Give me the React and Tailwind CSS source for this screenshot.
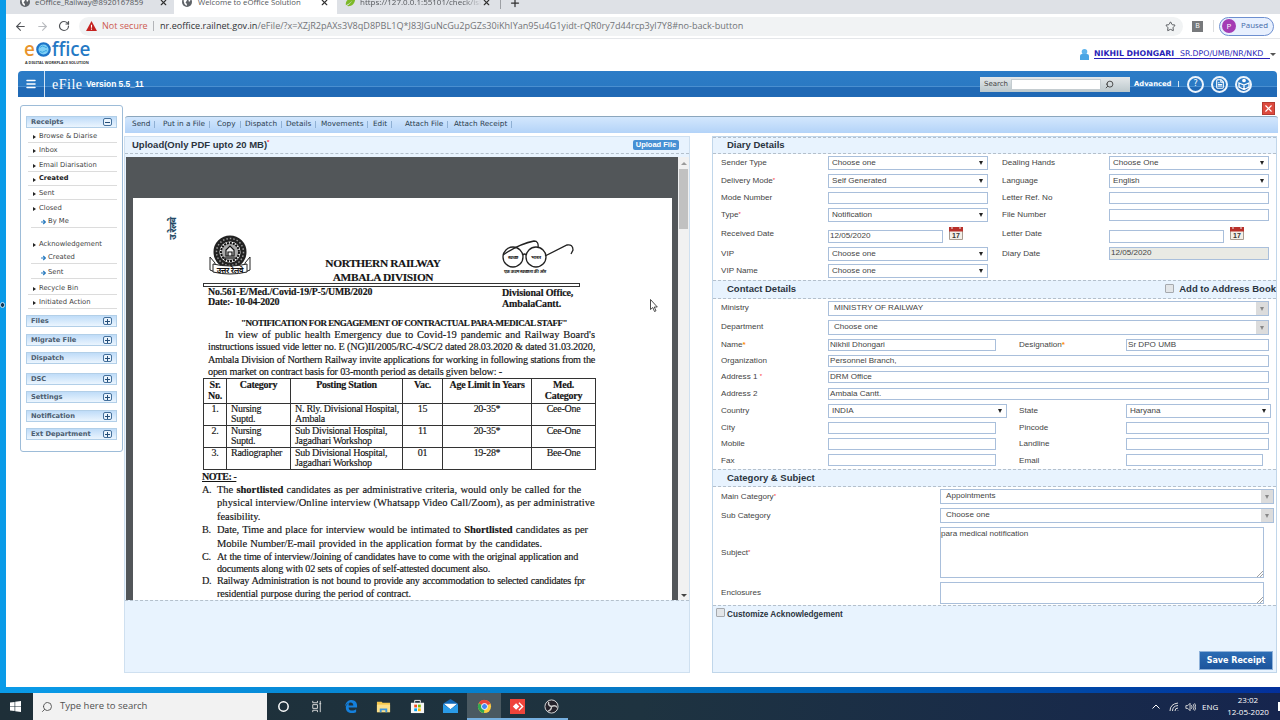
import React from 'react'
import { ArrowLeft, ArrowRight, RotateCw, Star, Plus, X, Search, Menu, FileText } from 'lucide-react'

const SIDE_ITEMS = [
  { label: 'Browse & Diarise', h: 'h-[14px]' },
  { label: 'Inbox', h: 'h-[14px]' },
  { label: 'Email Diarisation', h: 'h-[15px]' },
  { label: 'Created', h: 'h-[14px]', bold: true },
  { label: 'Sent', h: 'h-[14px]' },
  { label: 'Closed', h: 'h-[14px]', plain: true },
  { label: 'By Me', h: 'h-[14px]', sub: true },
  { label: '', h: 'h-[7px]', spacer: true },
  { label: 'Acknowledgement', h: 'h-[15px]', plain: true },
  { label: 'Created', h: 'h-[14px]', sub: true },
  { label: 'Sent', h: 'h-[15px]', sub: true },
  { label: 'Recycle Bin', h: 'h-[16px]' },
  { label: 'Initiated Action', h: 'h-[14px]' },
]

const SIDE_GROUPS = [
  { label: 'Files', h: 'h-[19px]' },
  { label: 'Migrate File', h: 'h-[18px]' },
  { label: 'Dispatch', h: 'h-[21px]' },
  { label: 'DSC', h: 'h-[18px]' },
  { label: 'Settings', h: 'h-[19px]' },
  { label: 'Notification', h: 'h-[18px]' },
  { label: 'Ext Department', h: 'h-[18px]' },
]

const TOOLS = [
  ['Send', 'w-[31px]'],
  ['Put in a File', 'w-[54px]'],
  ['Copy', 'w-[28px]'],
  ['Dispatch', 'w-[41px]'],
  ['Details', 'w-[35px]'],
  ['Movements', 'w-[52px]'],
  ['Edit', 'w-[32px]'],
  ['Attach File', 'w-[49px]'],
  ['Attach Receipt', 'w-[60px]'],
]

const POSTS = [
  { no: '1.', cat: ['Nursing', 'Suptd.'], station: ['N. Rly. Divisional Hospital,', 'Ambala'], vac: '15', age: '20-35*', med: 'Cee-One' },
  { no: '2.', cat: ['Nursing', 'Suptd.'], station: ['Sub Divisional Hospital,', 'Jagadhari Workshop'], vac: '11', age: '20-35*', med: 'Cee-One' },
  { no: '3.', cat: ['Radiographer'], station: ['Sub Divisional Hospital,', 'Jagadhari Workshop'], vac: '01', age: '19-28*', med: 'Bee-One' },
]

function Globe() {
  return (
    <svg viewBox="0 0 10 10" className="h-[10px] w-[10px] shrink-0">
      <circle cx="5" cy="5" r="5" fill="#5f6368" />
      <path d="M1.500 3.500 4 2l1 1.500L3.500 5.500 5 7 4.500 9 2.500 7zM6 1.500 8.500 3.500 7 5z" fill="#fff" />
    </svg>
  )
}

function BrowserTabs() {
  return (
    <div className="flex h-[14px] shrink-0 overflow-hidden bg-[#dee1e6] font-['Open_Sans','Noto_Sans',sans-serif] leading-[12px] text-[#55585c]">
      <div className="flex h-full w-[168px] items-start pl-[14px]">
        <div className="-mt-[3px]"><Globe /></div>
        <span className="-mt-[4px] ml-[5px] w-[124px] text-[7.800px] whitespace-nowrap">eOffice_Railway@8920167859</span>
        <X className="-mt-[2px] h-[9px] w-[9px] text-[#303030]" strokeWidth={3} />
      </div>
      <div className="flex h-full w-[163px] items-start bg-white pl-[8px]">
        <div className="-mt-[3px]"><Globe /></div>
        <span className="-mt-[4px] ml-[6px] w-[122px] text-[7.800px] whitespace-nowrap">Welcome to eOffice Solution</span>
        <X className="-mt-[2px] h-[9px] w-[9px] text-[#303030]" strokeWidth={3} />
      </div>
      <div className="flex h-full w-[163px] items-start pl-[8px]">
        <svg viewBox="0 0 12 12" className="-mt-[4px] h-[11px] w-[11px]">
          <path d="M1 10C0 4 5 3 11 0c1 6-2 12-9 11 3-2 4-3 6-6-3 3-4 4-7 5z" fill="#7db928" />
        </svg>
        <span className="-mt-[4px] ml-[4px] w-[122px] overflow-hidden text-[8px] whitespace-nowrap [mask-image:linear-gradient(90deg,#000_85%,transparent)]">https://127.0.0.1:55101/check/isL</span>
        <X className="-mt-[2px] h-[9px] w-[9px] text-[#303030]" strokeWidth={3} />
      </div>
      <div className="h-[9px] w-px bg-[#9da0a5]" />
      <Plus className="-mt-[3px] ml-[8px] h-[12px] w-[12px] text-[#303030]" strokeWidth={2.5} />
    </div>
  )
}

function AddressBar() {
  return (
    <div className="flex h-[25px] shrink-0 items-center border-b border-[#e4e6e9] bg-white font-['Open_Sans','Noto_Sans',sans-serif]">
      <ArrowLeft className="ml-[8px] h-[13px] w-[13px] text-[#505357]" />
      <ArrowRight className="ml-[9px] h-[13px] w-[13px] text-[#b9bbbf]" />
      <RotateCw className="ml-[9px] h-[12px] w-[12px] text-[#505357]" strokeWidth={2.4} />
      <div className="ml-[9px] flex h-[19px] w-[1104px] items-center rounded-full bg-[#f1f3f4] pl-[7px]">
        <svg viewBox="0 0 12 11" className="h-[10px] w-[11px]">
          <path d="M6 0 12 11H0z" fill="#c5221f" />
          <path d="M5.400 4h1.200v3.500H5.400zM5.400 8.300h1.200v1.200H5.400z" fill="#fff" />
        </svg>
        <span className="ml-[5px] w-[51px] text-[9px] whitespace-nowrap text-[#cd5a50]">Not secure</span>
        <span className="h-[10px] w-px bg-[#b3b5b8]" />
        <span className="ml-[6px] flex-1 text-[9.100px] whitespace-nowrap text-[#717478]">
          <span className="text-[#303235]">nr.eoffice.railnet.gov.in</span>/eFile/?x=XZjR2pAXs3V8qD8PBL1Q*J83JGuNcGu2pGZs30iKhIYan95u4G1yidt-rQR0ry7d44rcp3yl7Y8#no-back-button
        </span>
        <Star className="mr-[7px] h-[11px] w-[11px] text-[#4d5054]" strokeWidth={2} />
      </div>
      <div className="ml-[9px] flex h-[11px] w-[11px] items-center justify-center bg-[#77797c] text-[7px] text-white">B</div>
      <div className="ml-[10px] h-[12px] w-px bg-[#dcdee0]" />
      <div className="ml-[5px] flex h-[19px] w-[55px] items-center rounded-full border border-[#6d8fd0] bg-[#e8f0fe] pl-[2px]">
        <div className="flex h-[14px] w-[14px] items-center justify-center rounded-full bg-[#a43cb4] text-[8px] text-white">P</div>
        <span className="ml-[5px] text-[7.900px] text-[#4568a8]">Paused</span>
      </div>
    </div>
  )
}

function BrandRow() {
  return (
    <div className="flex h-[32px] shrink-0 justify-between">
      <div className="ml-[18px] w-[70px] pt-[1px] font-['Noto_Sans',sans-serif]">
        <div className="flex h-[18px] items-center text-[19px] leading-[18px] font-medium tracking-[-0.1px] text-[#2478c4]">
          <span className="text-[#e8932b]">e</span>
          <svg viewBox="0 0 16 16" className="mx-px h-[15px] w-[15px]">
            <circle cx="8" cy="8" r="6.600" fill="#7fd0f5" stroke="#1c74c8" strokeWidth="2.400" />
            <path d="M4 6q3-3 5-1t3 0M4 10q3 2 5 0t3 0" stroke="#2f9fe0" fill="none" />
          </svg>
          <span>ffice</span>
        </div>
        <div className="mt-[2px] ml-[1px] text-[3.800px] leading-[5px] font-bold whitespace-nowrap text-[#333]">A DIGITAL WORKPLACE SOLUTION</div>
      </div>
      <div className="mt-[9px] flex h-[12px] items-center font-['DejaVu_Sans',sans-serif] whitespace-nowrap text-[#2a1fb8]">
        <svg viewBox="0 0 9 11" className="mr-[5px] h-[11px] w-[9px]">
          <circle cx="4.500" cy="2.800" r="2.800" fill="#5fb4ec" />
          <path d="M0 11V7q0-2 2-2h5q2 0 2 2v4z" fill="#4aa5e4" />
        </svg>
        <div className="flex w-[176px] border-b border-[#2a1fb8] leading-[9px]">
          <b className="w-[86px] text-[7.800px]">NIKHIL DHONGARI</b>
          <span className="text-[7.800px]">SR.DPO/UMB/NR/NKD</span>
        </div>
        <span className="mr-[4px] border-x-[3px] border-t-[3px] border-x-transparent border-t-[#555]" />
      </div>
    </div>
  )
}

function RoundIcon({ children }) {
  return (
    <span className="flex h-[17px] w-[17px] items-center justify-center rounded-full border-2 border-[#eef5fc] text-white">{children}</span>
  )
}

function HeaderBar() {
  return (
    <div className="ml-[12px] flex h-[26px] w-[1259px] shrink-0 items-center rounded-t-[4px] bg-[linear-gradient(#2c7cc7_0,#2a79c3_15px,#4a8fd0_15px,#4a8fd0_16px,#2069b5_16px,#2069b5_100%)] font-['DejaVu_Sans',sans-serif] text-white">
      <div className="flex h-full w-[27px] items-center justify-center border-r border-white/80">
        <Menu className="h-[12px] w-[12px]" strokeWidth={3} />
      </div>
      <span className="ml-[7px] w-[34px] font-['Liberation_Serif',serif] text-[14px] tracking-[0.500px]">eFile</span>
      <span className="pt-px font-['Liberation_Sans',sans-serif] text-[8.400px] font-bold">Version 5.5_11</span>
      <div className="ml-auto flex h-[15px] w-[150px] items-center bg-gradient-to-b from-[#e4e8ea] to-[#bcc8cc] text-[#444]">
        <span className="w-[31px] pl-[4px] text-[7px]">Search</span>
        <span className="h-[11px] w-[90px] border border-[#c4ccd0] bg-white" />
        <Search className="ml-[4px] h-[9px] w-[9px] -scale-x-100 text-[#444]" strokeWidth={2.5} />
      </div>
      <span className="ml-[4px] w-[42px] text-[6.800px] font-bold">Advanced</span>
      <span className="mr-[8px] ml-[2px] h-[6px] w-px bg-white/80" />
      <div className="flex gap-[7px] pr-[25px]">
        <RoundIcon><span className="text-[8px] leading-none">?</span></RoundIcon>
        <RoundIcon><FileText className="h-[10px] w-[10px]" strokeWidth={2.5} /></RoundIcon>
        <RoundIcon>
          <svg viewBox="0 0 12 12" className="h-[12px] w-[12px]" fill="none" stroke="currentColor" strokeWidth="1.300">
            <circle cx="6" cy="2.500" r="1.200" fill="currentColor" />
            <path d="M1 5l5 2 5-2v4l-5 2.500L1 9zM6 7v4" />
          </svg>
        </RoundIcon>
      </div>
    </div>
  )
}

function SideHead({ label, open }) {
  return (
    <div className="flex h-[12px] items-center justify-between border border-[#b2cfe8] bg-gradient-to-b from-[#bfdcf8] to-[#ebf5fe] pr-[4px] pl-[4px] text-[6.700px] font-bold text-[#4c5d70]">
      <span>{label}</span>
      <span className="flex h-[8px] w-[9px] items-center justify-center rounded-[2px] border border-[#44709c] bg-[#eaf4fd]">
        <svg viewBox="0 0 5 5" className="h-[5px] w-[5px]">
          <path d={open ? 'M0 2.500h5' : 'M0 2.500h5M2.500 0v5'} stroke="#254e78" strokeWidth="1" />
        </svg>
      </span>
    </div>
  )
}

function Sidebar() {
  return (
    <div className="mt-[8px] ml-[14px] h-[347px] w-[103px] shrink-0 rounded-[3px] border border-[#9dbcd8] px-[5px] pt-[10px] font-['DejaVu_Sans',sans-serif] text-[6.800px] text-[#444]">
      <SideHead label="Receipts" open />
      <div className="pt-px pl-[2px]">
        {SIDE_ITEMS.map((it, i) => (
          <div
            key={i}
            className={`${it.h} flex items-end whitespace-nowrap ${it.plain || it.spacer ? '' : 'border-b border-[#dcdcdc]'} ${it.sub ? 'ml-[3px]' : ''}`}
          >
            {it.sub && (
              <svg viewBox="0 0 5 6" className="mr-[2px] mb-[2px] ml-[10px] h-[6px] w-[5px]">
                <path d="M0 3h4M2.200 1 4.400 3 2.200 5" fill="none" stroke="#2a7cc0" strokeWidth="1.200" />
              </svg>
            )}
            {!it.sub && !it.spacer && (
              <span className="mr-[3px] mb-[3px] ml-[5px] border-y-[2.500px] border-l-[3px] border-y-transparent border-l-[#222]" />
            )}
            <span className={it.bold ? 'pb-px text-[6.600px] font-bold text-[#222]' : 'pb-px'}>{it.label}</span>
          </div>
        ))}
      </div>
      <div className="pt-[6px]">
        {SIDE_GROUPS.map((g) => (
          <div key={g.label} className={g.h}>
            <SideHead label={g.label} />
          </div>
        ))}
      </div>
    </div>
  )
}

function Toolbar() {
  return (
    <div className="ml-[1px] flex h-[17px] w-[1153px] shrink-0 items-center rounded-t-[3px] border-t border-[#8ba6bd] bg-gradient-to-b from-[#d3e7fd] to-[#b3d3f8] pb-[2px] pl-[7px] font-['DejaVu_Sans',sans-serif] text-[7.300px] text-[#2c3e50]">
      {TOOLS.map(([label, w]) => (
        <div key={label} className={`${w} flex items-center whitespace-nowrap`}>
          <span>{label}</span>
          <span className="ml-[4px] h-[7px] w-px bg-[#8fb0d4]" />
        </div>
      ))}
    </div>
  )
}

// one scanned text line stretched to its measure
function Line({ w, h = 'h-[12px]', children, className = '' }) {
  return <div className={`${w} ${h} whitespace-nowrap [text-align-last:justify] ${className}`}>{children}</div>
}

function Emblem() {
  return (
    <svg viewBox="0 0 44 42" className="h-[42px] w-[44px]">
      <circle cx="21" cy="17" r="13.500" fill="none" stroke="#222" strokeWidth="6" />
      <circle cx="21" cy="17" r="13.500" fill="none" stroke="#999" strokeWidth="1.500" strokeDasharray="1.500 2" />
      <circle cx="21" cy="17" r="9" fill="#aaa" stroke="#111" strokeWidth="2" strokeDasharray="2 1" />
      <path d="M17 21v-6l4-4 4 4v6zM19 21v-4h4v4M14 23h14" fill="#eee" stroke="#111" strokeWidth="1.200" />
      <path d="M1 22v13l5 2v-9zM41 22v13l-5 2v-9z" fill="#fff" stroke="#222" />
      <path d="M4 29q17 4 34 0v8q-17 4-34 0z" fill="#fff" stroke="#222" />
      <text x="21" y="37.500" textAnchor="middle" fontSize="7.500" fontWeight="bold" fontFamily="Noto Sans Devanagari, Noto Sans, sans-serif" fill="#111">उत्तर रेलवे</text>
    </svg>
  )
}

function Glasses() {
  return (
    <svg viewBox="0 0 74 36" className="h-[36px] w-[74px]" fill="none" stroke="#222" strokeWidth="1.300">
      <circle cx="12" cy="17" r="10" />
      <circle cx="35" cy="17" r="10" />
      <path d="M22 15q1.500-2 3 0M2 15Q18 4 33 1q5 0 4 7M44 16 66 5q6-1 6 5l-2 4" />
      <g stroke="none" fill="#222" fontFamily="Noto Sans Devanagari, Noto Sans, sans-serif" fontWeight="bold" textAnchor="middle">
        <text x="12" y="19" fontSize="5">स्वच्छ</text>
        <text x="35" y="19" fontSize="5">भारत</text>
        <text x="24" y="33" fontSize="4.500">एक कदम स्वच्छता की ओर</text>
      </g>
    </svg>
  )
}

function NoteItem({ mark, children }) {
  return (
    <div className="flex">
      <span className="w-[15px]">{mark}</span>
      <div>{children}</div>
    </div>
  )
}

function ScannedPage() {
  return (
    <div className="mt-[41px] ml-[7px] h-[403px] w-[539px] overflow-hidden bg-white font-['Liberation_Serif',serif] text-[10.200px] leading-[12px] tracking-[-0.270px] text-[#141414] [-webkit-text-stroke:0.150px]">
      <div className="flex h-[85px]">
        <div className="flex w-[76px] justify-center pt-[18px]">
          <span className="-rotate-90 self-start pt-[5px] pr-[8px] font-['Noto_Sans_Devanagari','Noto_Sans',sans-serif] text-[9px] font-bold whitespace-nowrap text-[#244a66]">उ.रेलवे</span>
        </div>
        <div className="w-[44px] pt-[37px]"><Emblem /></div>
        <div className="w-[260px] pt-[58px] text-center text-[11.400px] leading-[14px] font-bold tracking-[-0.370px]">
          <div>NORTHERN RAILWAY</div>
          <div>AMBALA DIVISION</div>
        </div>
        <div className="-ml-[12px] pt-[42px]"><Glasses /></div>
      </div>
      <div className="ml-[70px] h-[4px] w-[377px] border border-[#333]" />
      <div className="ml-[75px] flex h-[30px] justify-between pr-[77px] text-[10px] leading-[10px] font-bold">
        <div className="w-[165px]">
          <Line w="w-[165px]" h="h-[10px]" className="text-[9.800px] tracking-[-0.130px]">No.561-E/Med./Covid-19/P-5/UMB/2020</Line>
          <div>Date:- 10-04-2020</div>
        </div>
        <div className="w-[93px] pt-px leading-[10.500px] tracking-[-0.150px]">
          <div>Divisional Office,</div>
          <div>AmbalaCantt.</div>
        </div>
      </div>
      <Line w="w-[326px]" className="ml-[108px] text-[9px] font-bold tracking-[-0.490px]">&quot;NOTIFICATION FOR ENGAGEMENT OF CONTRACTUAL PARA-MEDICAL STAFF&quot;</Line>
      <div className="ml-[75px] leading-[12.500px]">
        <Line w="w-[370px]" h="h-[12.300px]" className="ml-[17px] text-[10.500px] tracking-[0px]">In view of public health Emergency due to Covid-19 pandemic and Railway Board&apos;s</Line>
        <Line w="w-[387px]" h="h-[12.300px]" className="tracking-[-0.200px]">instructions issued vide letter no. E (NG)II/2005/RC-4/SC/2 dated 28.03.2020 &amp; dated 31.03.2020,</Line>
        <Line w="w-[387px]" h="h-[12.300px]">Ambala Division of Northern Railway invite applications for working in following stations from the</Line>
        <Line w="w-[294px]" h="h-[12px]" className="tracking-[-0.200px]">open market on contract basis for 03-month period as details given below: -</Line>
      </div>
      <table className="ml-[70px] w-[393px] table-fixed border-collapse text-[10px] leading-[11px] [&_td]:border [&_td]:border-[#333] [&_td]:p-0 [&_td]:align-top [&_th]:border [&_th]:border-[#333] [&_th]:p-0 [&_th]:align-top">
        <colgroup>
          <col className="w-[23px]" />
          <col className="w-[64px]" />
          <col className="w-[112px]" />
          <col className="w-[40px]" />
          <col className="w-[89px]" />
          <col className="w-[64px]" />
        </colgroup>
        <thead>
          <tr className="h-[25px]">
            <th>Sr.<br />No.</th>
            <th>Category</th>
            <th>Posting Station</th>
            <th>Vac.</th>
            <th>Age Limit in Years</th>
            <th>Med.<br />Category</th>
          </tr>
        </thead>
        <tbody className="leading-[10.500px]">
          {POSTS.map((p) => (
            <tr key={p.no} className="h-[22px] text-center">
              <td>{p.no}</td>
              <td className="text-left"><div className="pl-[4px]">{p.cat.map((l) => <div key={l}>{l}</div>)}</div></td>
              <td className="text-left"><div className="pl-[4px] whitespace-nowrap">{p.station.map((l) => <div key={l}>{l}</div>)}</div></td>
              <td>{p.vac}</td>
              <td>{p.age}</td>
              <td>{p.med}</td>
            </tr>
          ))}
        </tbody>
      </table>
      <div className="ml-[69px]">
        <div className="h-[14px] pt-px text-[10px] font-bold tracking-[-0.450px] underline">NOTE: -</div>
        <NoteItem mark="A.">
          <Line w="w-[364px]" h="h-[13.500px]" className="text-[10.500px] tracking-[-0.050px]">The <b>shortlisted</b> candidates as per administrative criteria, would only be called for the</Line>
          <Line w="w-[375px]" h="h-[13.500px]" className="text-[10.500px] tracking-[0.080px]">physical interview/Online interview (Whatsapp Video Call/Zoom), as per administrative</Line>
          <Line w="w-[44px]" h="h-[13.500px]" className="text-[10.500px] tracking-[-0.050px]">feasibility.</Line>
        </NoteItem>
        <NoteItem mark="B.">
          <Line w="w-[371px]" h="h-[13.500px]" className="text-[10.500px] tracking-[-0.050px]">Date, Time and place for interview would be intimated to <b>Shortlisted</b> candidates as per</Line>
          <Line w="w-[325px]" h="h-[13px]" className="text-[10.500px] tracking-[-0.050px]">Mobile Number/E-mail provided in the application format by the candidates.</Line>
        </NoteItem>
        <NoteItem mark="C.">
          <Line w="w-[361px]" h="h-[12.300px]">At the time of interview/Joining of candidates have to come with the original application and</Line>
          <Line w="w-[273px]" h="h-[12.300px]" className="tracking-[-0.230px]">documents along with 02 sets of copies of self-attested document also.</Line>
        </NoteItem>
        <NoteItem mark="D.">
          <Line w="w-[368px]" h="h-[12.300px]">Railway Administration is not bound to provide any accommodation to selected candidates fpr</Line>
          <Line w="w-[194px]" h="h-[12.300px]" className="tracking-[-0.130px]">residential purpose during the period of contract.</Line>
        </NoteItem>
      </div>
    </div>
  )
}

function UploadPanel() {
  return (
    <div className="flex h-[537px] w-[566px] flex-col border border-[#cfe0f0] bg-[#e8f3fe]">
      <div className="flex h-[17px] shrink-0 items-center justify-between border-b border-dashed border-[#b4c0cc] pr-[10px] pl-[7px] text-[9.500px] font-bold text-[#2b3440]">
        <span>Upload(Only PDF upto 20 MB)<span className="align-top text-[6px] leading-[8px] text-red-500">*</span></span>
        <span className="flex h-[10px] w-[46px] items-center justify-center rounded-[2px] bg-[#4790d4] text-[7.500px] whitespace-nowrap text-white">Upload File</span>
      </div>
      <div className="mt-[3px] flex h-[444px] shrink-0 overflow-hidden border-b border-dashed border-[#b4c0cc] pl-[1px]">
        <div className="w-[553px] bg-[#525659]"><ScannedPage /></div>
        <div className="flex w-[11px] flex-col items-center bg-[#f1f1f1] pt-[5px] pb-[3px]">
          <span className="border-x-[3px] border-b-[3px] border-x-transparent border-b-[#9a9a9a]" />
          <span className="mt-[4px] h-[60px] w-[9px] bg-[#c1c1c1]" />
          <span className="mt-auto border-x-[3px] border-t-[3px] border-x-transparent border-t-[#444]" />
        </div>
      </div>
    </div>
  )
}

function Label({ w, star, children, className = '' }) {
  return (
    <span className={`${w} flex shrink-0 leading-[14px] whitespace-pre ${className}`}>
      <span>{children}</span>
      {star === 'red' && <span className="text-[6px] leading-[12px] text-red-500">*</span>}
      {star === 'orange' && <span className="text-[8px] leading-[13px] font-bold text-orange-400">*</span>}
    </span>
  )
}

function Select({ w, children }) {
  return (
    <div className={`${w} flex h-[14px] shrink-0 items-center justify-between border border-[#a9bfdb] bg-white pr-[4px] pl-[3px]`}>
      <span>{children}</span>
      <span className="border-x-[2.500px] border-t-[4px] border-x-transparent border-t-[#222]" />
    </div>
  )
}

function Combo({ w, children }) {
  return (
    <div className={`${w} flex h-[15px] shrink-0 items-center justify-between border border-[#a9bfdb] bg-white pl-[5px]`}>
      <span>{children}</span>
      <span className="flex h-full w-[12px] items-center justify-center bg-[#dcdcdc]">
        <span className="border-x-[2.500px] border-t-[4px] border-x-transparent border-t-[#888]" />
      </span>
    </div>
  )
}

function Field({ w, h = 'h-[12px]', bg = 'bg-white', children }) {
  return (
    <div className={`${w} ${h} ${bg} flex shrink-0 items-center border border-[#a9bfdb] pl-px whitespace-nowrap`}>{children}</div>
  )
}

function Calendar() {
  return (
    <svg viewBox="0 0 14 14" className="ml-[6px] h-[14px] w-[14px] shrink-0">
      <path d="M.5 1.500h13v12H.5z" fill="#f3efe8" stroke="#a89c90" />
      <path d="M0 1h14v4.500H0z" fill="#b8302a" />
      <path d="M3 0v3M11 0v3" stroke="#eee" />
      <text x="7" y="12" textAnchor="middle" fontSize="7" fontWeight="bold" fontFamily="Liberation Sans, sans-serif" fill="#333">17</text>
    </svg>
  )
}

function SectionHead({ h, children, extra }) {
  return (
    <div className={`${h} flex shrink-0 items-center justify-between border-y border-dashed border-[#b4c0cc] bg-[#e8f3fe] pl-[14px] text-[9.500px] font-bold whitespace-nowrap text-[#2b3440]`}>
      <span>{children}</span>
      {extra}
    </div>
  )
}

function Row({ h, children }) {
  return <div className={`${h} flex items-start pl-[8px]`}>{children}</div>
}

function Checkbox() {
  return <span className="h-[9px] w-[9px] shrink-0 rounded-[1px] border border-[#a5a9ae] bg-[#e2e5e8]" />
}

function Grip() {
  return (
    <svg viewBox="0 0 6 6" className="h-[6px] w-[6px]">
      <path d="M0 6 6 0M3 6l3-3" stroke="#888" strokeWidth=".8" />
    </svg>
  )
}

function FormPanel() {
  return (
    <div className="flex h-[537px] w-[565px] flex-col border border-[#c0d6ea] bg-white text-[8.100px] text-[#444]">
      <SectionHead h="h-[17px]">Diary Details</SectionHead>
      <div className="h-[126px] pt-[2px]">
        <Row h="h-[18px]">
          <Label w="w-[107px]">Sender Type</Label><Select w="w-[160px]">Choose one</Select>
          <Label w="w-[107px]" className="ml-[14px]">Dealing Hands</Label><Select w="w-[160px]">Choose One</Select>
        </Row>
        <Row h="h-[18px]">
          <Label w="w-[107px]" star="red">Delivery Mode</Label><Select w="w-[160px]">Self Generated</Select>
          <Label w="w-[107px]" className="ml-[14px]">Language</Label><Select w="w-[160px]">English</Select>
        </Row>
        <Row h="h-[16px]">
          <Label w="w-[107px]" className="-mt-px">Mode Number</Label><Field w="w-[160px]" />
          <Label w="w-[107px]" className="-mt-px ml-[14px]">Letter Ref. No</Label><Field w="w-[160px]" />
        </Row>
        <Row h="h-[18px]">
          <Label w="w-[107px]" star="red">Type</Label><Select w="w-[160px]">Notification</Select>
          <Label w="w-[107px]" className="ml-[14px]">File Number</Label>
          <div className="pt-px"><Field w="w-[160px]" /></div>
        </Row>
        <Row h="h-[21px]">
          <Label w="w-[107px]" className="pt-px">Received Date</Label>
          <div className="pt-[4px]"><Field w="w-[115px]" h="h-[13px]">12/05/2020</Field></div>
          <Calendar />
          <Label w="w-[107px]" className="ml-[39px] pt-px">Letter Date</Label>
          <div className="pt-[4px]"><Field w="w-[115px]" h="h-[13px]" /></div>
          <Calendar />
        </Row>
        <Row h="h-[17px]">
          <Label w="w-[107px]">VIP</Label><Select w="w-[160px]">Choose one</Select>
          <Label w="w-[107px]" className="ml-[14px]">Diary Date</Label><Field w="w-[160px]" h="h-[13px]" bg="bg-[#e9eae4]">12/05/2020</Field>
        </Row>
        <Row h="h-[16px]">
          <Label w="w-[107px]">VIP Name</Label><Select w="w-[160px]">Choose one</Select>
        </Row>
      </div>

      <SectionHead
        h="h-[19px]"
        extra={<span className="flex items-center gap-[5px]"><span className="flex pb-[3px]"><Checkbox /></span><span>Add to Address Book</span></span>}
      >
        Contact Details
      </SectionHead>
      <div className="h-[170px] pt-[2px]">
        <Row h="h-[19px]"><Label w="w-[107px]">Ministry</Label><Combo w="w-[441px]">MINISTRY OF RAILWAY</Combo></Row>
        <Row h="h-[19px]"><Label w="w-[107px]">Department</Label><Combo w="w-[441px]">Choose one</Combo></Row>
        <Row h="h-[16px]">
          <Label w="w-[107px]" star="orange" className="-mt-px">Name</Label><Field w="w-[168px]">Nikhil Dhongari</Field>
          <Label w="w-[107px]" star="orange" className="-mt-px ml-[23px]">Designation</Label><Field w="w-[143px]">Sr DPO UMB</Field>
        </Row>
        <Row h="h-[16px]"><Label w="w-[107px]" className="-mt-px">Organization</Label><Field w="w-[441px]">Personnel Branch,</Field></Row>
        <Row h="h-[17px]"><Label w="w-[107px]" star="red" className="-mt-px">{'Address 1 '}</Label><Field w="w-[441px]">DRM Office</Field></Row>
        <Row h="h-[16px]"><Label w="w-[107px]" className="-mt-px">Address 2</Label><Field w="w-[441px]">Ambala Cantt.</Field></Row>
        <Row h="h-[18px]">
          <Label w="w-[107px]">Country</Label><Select w="w-[179px]">INDIA</Select>
          <Label w="w-[107px]" className="ml-[12px]">State</Label><Select w="w-[145px]">Haryana</Select>
        </Row>
        <Row h="h-[16px]">
          <Label w="w-[107px]" className="-mt-px">City</Label><Field w="w-[168px]" />
          <Label w="w-[107px]" className="-mt-px ml-[23px]">Pincode</Label><Field w="w-[143px]" />
        </Row>
        <Row h="h-[16px]">
          <Label w="w-[107px]" className="-mt-px">Mobile</Label><Field w="w-[168px]" />
          <Label w="w-[107px]" className="-mt-px ml-[23px]">Landline</Label><Field w="w-[143px]" />
        </Row>
        <Row h="h-[15px]">
          <Label w="w-[107px]">Fax</Label><Field w="w-[168px]" />
          <Label w="w-[107px]" className="ml-[23px]">Email</Label><Field w="w-[137px]" />
        </Row>
      </div>

      <SectionHead h="h-[18px]">Category &amp; Subject</SectionHead>
      <div className="h-[118px] pt-[2px]">
        <Row h="h-[19px]"><Label w="w-[219px]" star="red" className="pt-px">Main Category</Label><Combo w="w-[334px]">Appointments</Combo></Row>
        <Row h="h-[19px]"><Label w="w-[219px]" className="pt-px">Sub Category</Label><Combo w="w-[334px]">Choose one</Combo></Row>
        <Row h="h-[55px]">
          <Label w="w-[219px]" star="red" className="pt-[19px]">Subject</Label>
          <div className="flex h-[51px] w-[324px] items-end justify-between border border-[#a9bfdb] bg-white">
            <span className="h-full">para medical notification</span>
            <Grip />
          </div>
        </Row>
        <Row h="h-[22px]">
          <Label w="w-[219px]" className="pt-[4px]">Enclosures</Label>
          <div className="flex h-[22px] w-[324px] items-end justify-end border border-[#a9bfdb] bg-white"><Grip /></div>
        </Row>
      </div>

      <div className="flex flex-1 flex-col justify-between border-t border-dashed border-[#b4c0cc] bg-[#e8f3fe]">
        <div className="flex items-start gap-[2px] pt-[2px] pl-[3px]">
          <Checkbox />
          <span className="pt-px text-[8.200px] font-bold text-[#2b3440]">Customize Acknowledgement</span>
        </div>
        <div className="mr-[3px] mb-[2px] flex h-[19px] w-[74px] items-center justify-center self-end border border-[#8fb2da] bg-gradient-to-b from-[#2c6cb4] to-[#1c549c] font-['DejaVu_Sans',sans-serif] text-[8px] font-bold whitespace-nowrap text-white">
          Save Receipt
        </div>
      </div>
    </div>
  )
}

function TaskIcon({ wide, active, line, children }) {
  return (
    <div className={`flex h-full items-center justify-center border-b-2 ${wide ? 'w-[34px]' : 'w-[33px]'} ${active ? 'bg-[#4a5961]' : ''} ${active || line ? 'border-[#76b0e0]' : 'border-transparent'}`}>
      <svg viewBox="0 0 16 16" className="mt-[1px] h-[15px] w-[15px]">{children}</svg>
    </div>
  )
}

function Taskbar() {
  return (
    <div className="flex h-[27px] shrink-0 items-center bg-gradient-to-r from-[#1e2f38] via-[#1e3340] to-[#16254e] font-['Open_Sans','Noto_Sans',sans-serif] text-white">
      <svg viewBox="0 0 12 12" className="ml-[10px] h-[11px] w-[11px]">
        <path d="M0 1.700 5 1v4.700H0zM5.700.9 12 0v5.700H5.700zM0 6.300h5V11l-5-.7zM5.700 6.300H12V12l-6.300-.9z" fill="#fff" />
      </svg>
      <div className="ml-[12px] flex h-full w-[234px] items-center bg-[#f2f2f2] text-[#505050]">
        <Search className="ml-[8px] h-[12px] w-[12px] -scale-x-100" strokeWidth={1.8} />
        <span className="ml-[7px] text-[9.500px] whitespace-nowrap">Type here to search</span>
      </div>
      <div className="flex h-full">
        <TaskIcon><circle cx="8" cy="8" r="5" fill="none" stroke="#fff" strokeWidth="1.600" /></TaskIcon>
        <TaskIcon>
          <path d="M4 2v2h5V2M4 14v-2h5v2M4 6h5v4H4zM12 2v12M11 5h2" fill="none" stroke="#ddd" />
        </TaskIcon>
        <TaskIcon wide>
          <path d="M2 8C3 2 7 1 9 1c4 0 6 3 6 6v2H6c0 4 5 4 8 2v3c-5 2-11 1-11-5 0-3 2-4 4-5-1 1-1 2-1 3h5c0-5-6-4-9 1z" fill="#1580dc" />
        </TaskIcon>
        <TaskIcon>
          <path d="M1 3h5l1 1h8v10H1z" fill="#f4c64c" />
          <path d="M1 6h14v8H1z" fill="#fde08a" />
          <path d="M4 14v-4h8v4h-2v-2H6v2z" fill="#3f96dc" />
        </TaskIcon>
        <TaskIcon wide>
          <path d="M1 4h14v11H1z" fill="#f5f5f5" />
          <path d="M5 4V1.500h6V4" fill="none" stroke="#f5f5f5" />
          <path d="M4.500 6h3v3h-3z" fill="#f25022" />
          <path d="M8.500 6h3v3h-3z" fill="#7fba00" />
          <path d="M4.500 10h3v3h-3z" fill="#00a4ef" />
          <path d="M8.500 10h3v3h-3z" fill="#ffb900" />
        </TaskIcon>
        <TaskIcon>
          <path d="M0 5 8 0l8 5v10H0z" fill="#1268b8" />
          <path d="M1 5h14l-7 6z" fill="#fff" />
          <path d="M0 5.500 8 11l8-5.500V15H0z" fill="#2a9be8" />
        </TaskIcon>
        <TaskIcon wide active>
          <circle cx="8" cy="8" r="7" fill="#ffcd42" />
          <path d="M8 8 2 4.400A7 7 0 0 1 14.400 5z" fill="#e8453c" />
          <path d="M8 8 1.900 4.500A7 7 0 0 0 7.500 15z" fill="#30a852" />
          <circle cx="8" cy="8" r="3.200" fill="#4285f4" stroke="#fff" />
        </TaskIcon>
        <TaskIcon line>
          <path d="M0 0h16v16H0z" fill="#ef443b" />
          <path d="M3 8l3.500-3.500L10 8l-3.500 3.500zM9 4.500l1-1L14.500 8 10 12.500l-1-1L12.500 8z" fill="#fff" />
        </TaskIcon>
        <TaskIcon wide line>
          <circle cx="8" cy="8" r="7" fill="#25222b" stroke="#ddd" />
          <path d="M8 8Q4 7 5 3M8 8q4-2 6 1M8 8q0 4-4 5" fill="none" stroke="#ccc" strokeWidth="1.500" />
        </TaskIcon>
      </div>
      <div className="ml-auto flex h-full items-center text-[8px]">
        <svg viewBox="0 0 8 5" className="mr-[9px] h-[5px] w-[8px]"><path d="M.5 4.500 4 1l3.500 3.500" fill="none" stroke="#fff" /></svg>
        <svg viewBox="0 0 10 10" className="mr-[6px] h-[10px] w-[10px]" fill="none" stroke="#ddd">
          <path d="M1 9Q1 2 9 1M3.500 9q0-5 5.500-5.500M6 9q0-3 3-3M8.500 9l.5-.5" />
        </svg>
        <svg viewBox="0 0 12 10" className="mr-[6px] h-[10px] w-[11px]" fill="none" stroke="#ddd">
          <path d="M1 3.500h2L5.500 1v8L3 6.500H1zM7 3q1.500 2 0 4M9 2q2 3 0 6M10.500 1q3 4 0 8" />
        </svg>
        <span className="w-[25px]">ENG</span>
        <div className="w-[42px] pb-[2px] text-center text-[8px] leading-[12px]">
          <div>23:02</div>
          <div className="whitespace-nowrap">12-05-2020</div>
        </div>
        <span className="ml-[9px] h-[9px] w-[2px] bg-white" />
      </div>
    </div>
  )
}

function Cursor() {
  return (
    <svg viewBox="0 0 8 13" className="absolute top-[299px] left-[650px] h-[13px] w-[8px]">
      <path d="M.5.5v10l2.300-2 1.700 4 1.500-.7-1.700-3.800h3z" fill="#fff" stroke="#222" strokeWidth=".8" />
    </svg>
  )
}

export default function App() {
  return (
    <div className="relative flex h-[720px] w-[1280px] flex-col overflow-hidden bg-white font-['Liberation_Sans',Arial,sans-serif]">
      <div className="flex h-[693px] shrink-0 flex-col bg-gradient-to-r from-[#0a9be8] via-[#0577c4] to-[#04309a]">
        <div className="flex h-[687px]">
          <div className="flex w-[6px] shrink-0 items-center overflow-hidden">
            <span className="-mt-[78px] h-[6px] w-[5px] rounded-full border border-[#bfe4fa] bg-[#143a58]" />
          </div>
          <div className="flex w-[1274px] flex-col bg-white">
            <BrowserTabs />
            <AddressBar />
            <BrandRow />
            <HeaderBar />
            <div className="flex">
              <Sidebar />
              <div className="ml-[1px] flex flex-col">
                <div className="flex h-[19px] items-center justify-end pt-[4px] pr-[3px]">
                  <span className="flex h-[13px] w-[13px] items-center justify-center border border-[#b43a30] bg-[#dd4a3e] text-white">
                    <X className="h-[11px] w-[11px]" strokeWidth={2.5} />
                  </span>
                </div>
                <Toolbar />
                <div className="mt-[3px] flex gap-[22px]">
                  <UploadPanel />
                  <FormPanel />
                </div>
              </div>
            </div>
          </div>
        </div>
      </div>
      <Taskbar />
      <Cursor />
    </div>
  )
}
